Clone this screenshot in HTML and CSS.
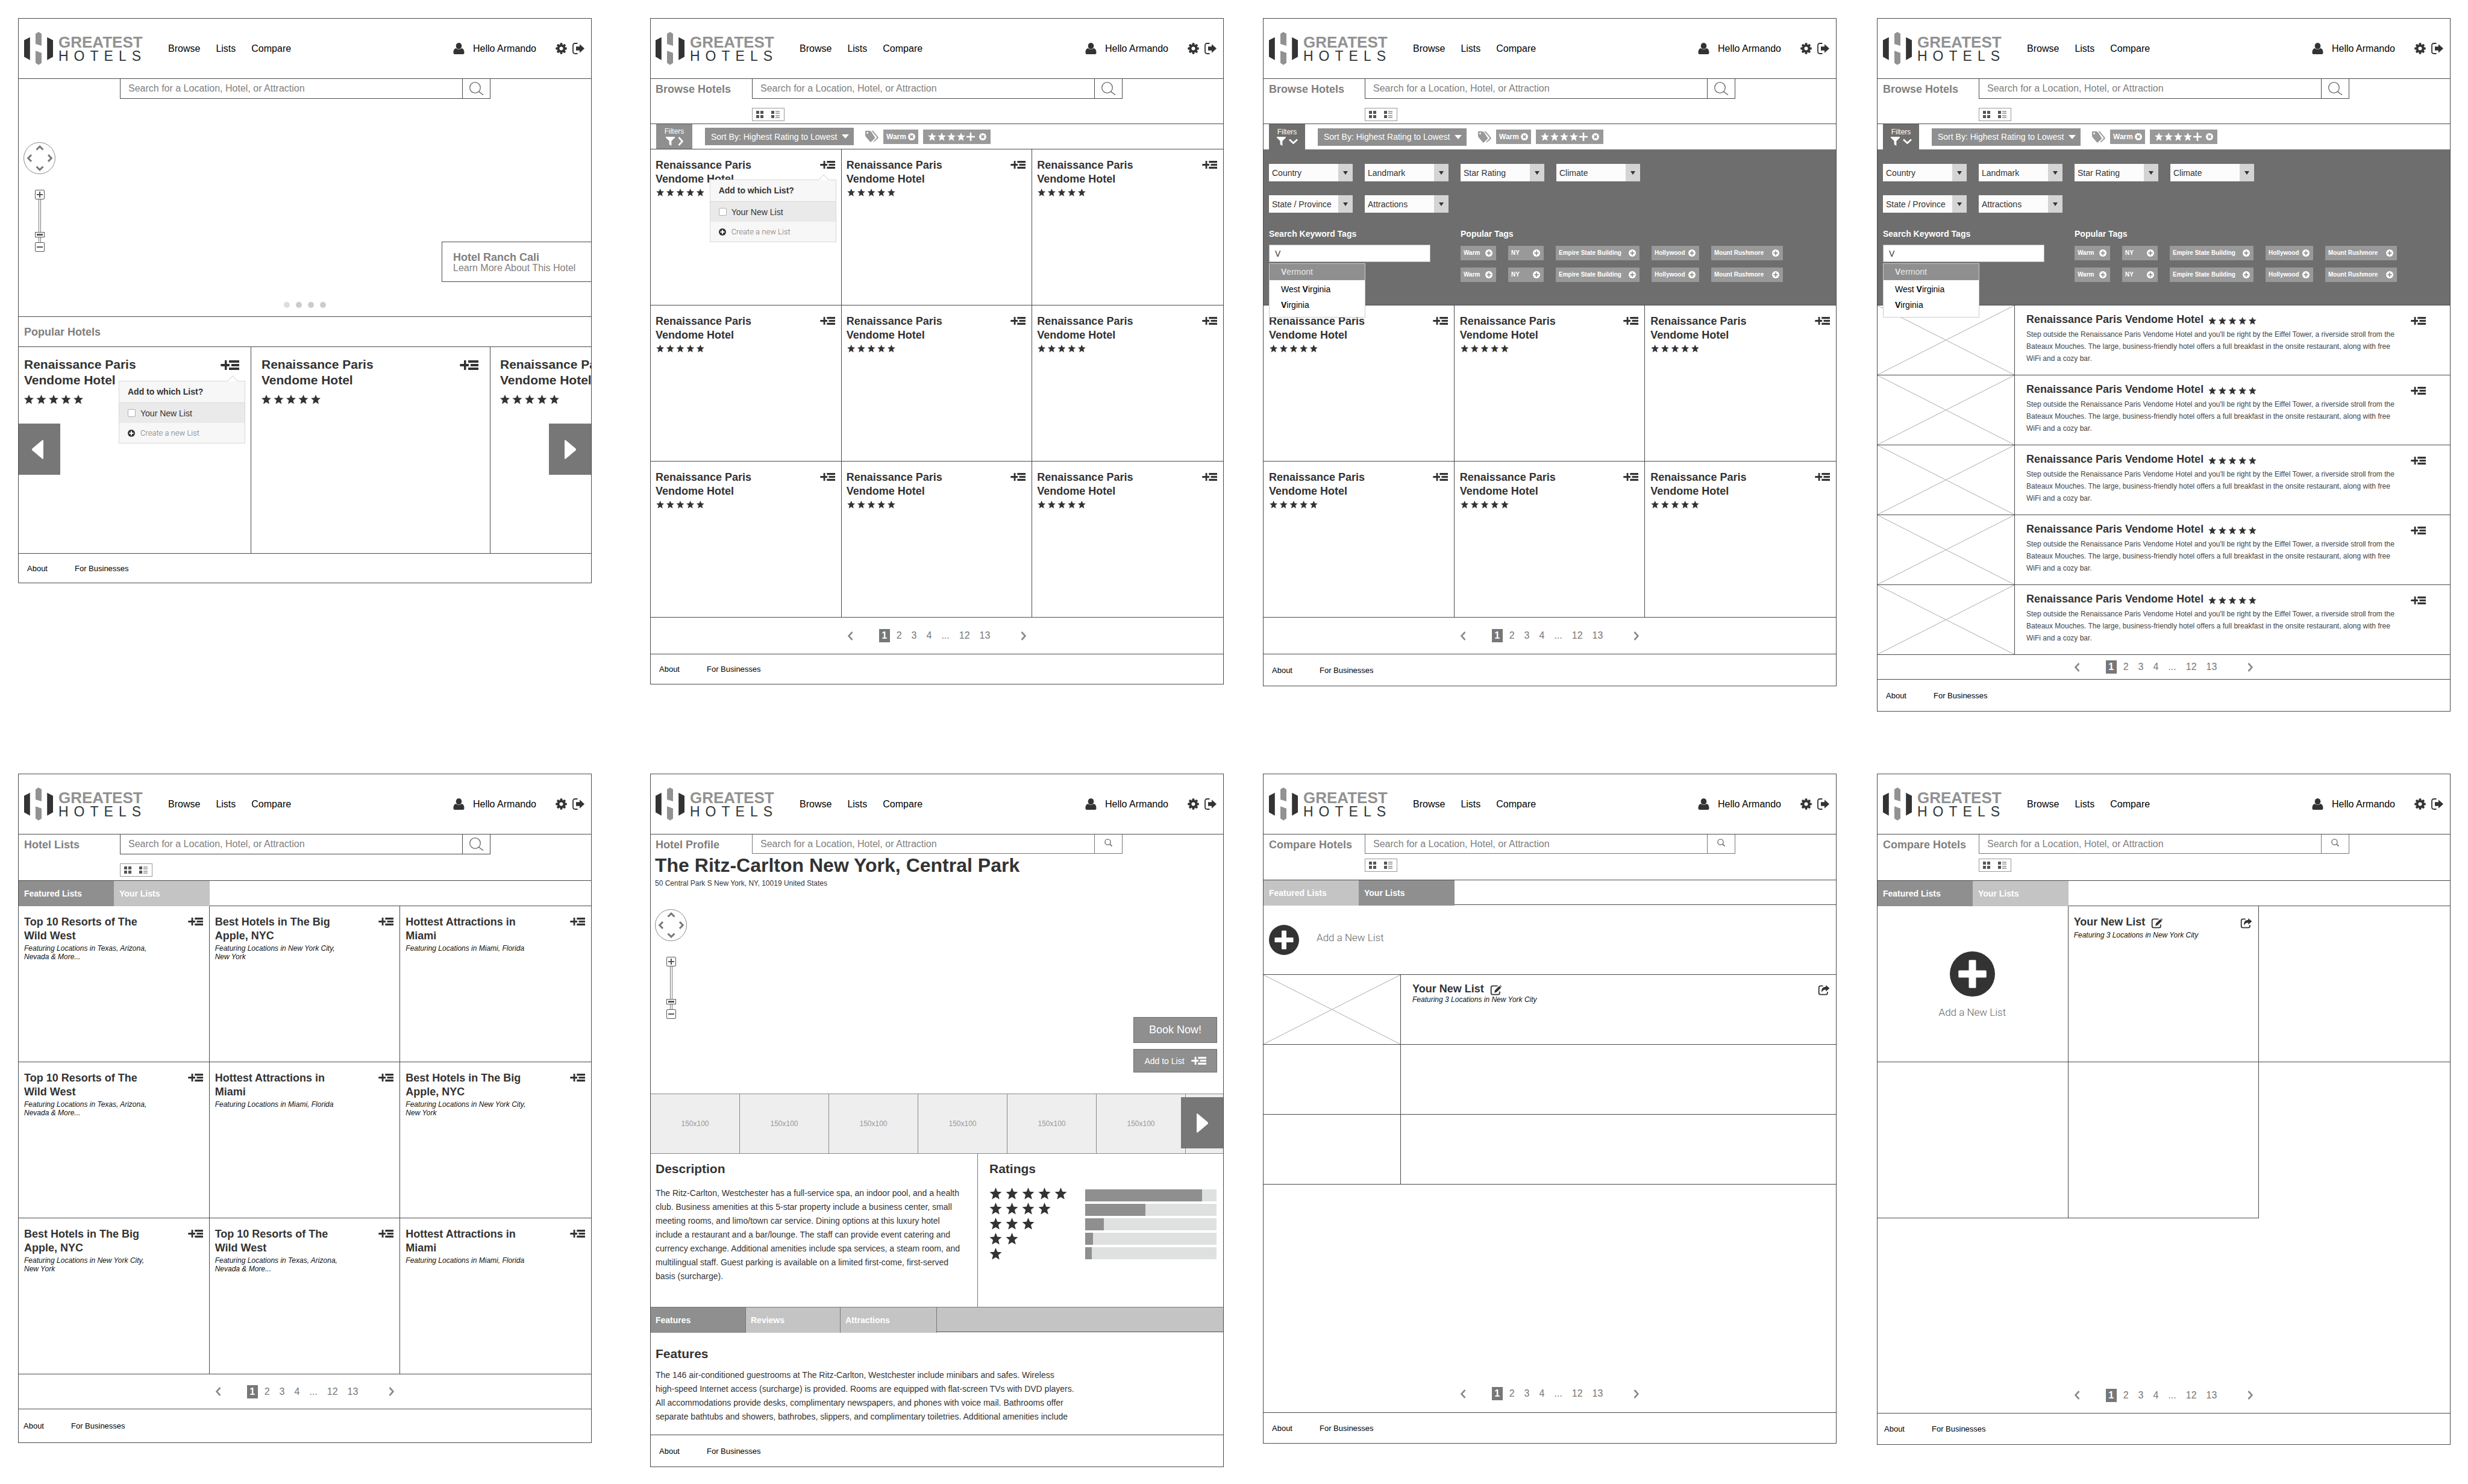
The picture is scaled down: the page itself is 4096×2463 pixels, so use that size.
FILE: index.html
```html
<!DOCTYPE html>
<html lang="en">
<head>
<meta charset="utf-8">
<title>Greatest Hotels – Wireframes</title>
<link rel="stylesheet" href="styles.css">
</head>
<body>
<svg class="defs" aria-hidden="true">
  <symbol id="logo" viewBox="0 0 48 55"><path fill="#333" d="M0 13.7 9.8 8.7v38L0 41.3zM48 13.7 38.2 8.7v38L48 41.3z"/><path fill="#929292" d="M19 3 24 0l5 3v20l-10-3zM19 31.3l10 3.5v16.7L24 54.7l-5-3.2z"/></symbol>
  <symbol id="user" viewBox="0 0 18 19"><ellipse cx="9" cy="5.2" rx="4.8" ry="5.2"/><path d="M0 16.5c0-4 1-6.500 4.400-7.500 2.600 2.500 6.600 2.500 9.200 0C17 10 18 12.500 18 16.500Q18 19 15.500 19h-13Q0 19 0 16.500z"/></symbol>
  <symbol id="gear" viewBox="0 0 20 20"><circle cx="10" cy="10" r="7.200"/><g id="teeth"><rect x="8" y="0.300" width="4" height="19.400" rx="1"/><rect x="0.300" y="8" width="19.400" height="4" rx="1"/></g><g transform="rotate(45 10 10)"><rect x="8" y="0.300" width="4" height="19.400" rx="1"/><rect x="0.300" y="8" width="19.400" height="4" rx="1"/></g><circle cx="10" cy="10" r="3.200" fill="#fff"/></symbol>
  <symbol id="exit" viewBox="0 0 20 19"><path d="M8.500 1H4.500Q1 1 1 4.500v10Q1 18 4.500 18h4" fill="none" stroke="currentColor" stroke-width="1.800"/><path d="M6 6.200h6V2.200l8 7.300-8 7.300v-4H6z"/></symbol>
  <symbol id="lens" viewBox="0 0 24 22"><ellipse cx="9.500" cy="9.500" rx="8.800" ry="8.800" fill="none" stroke="currentColor" stroke-width="1.300"/><path d="M15.500 16l7.500 5.500" fill="none" stroke="currentColor" stroke-width="1.500"/></symbol>
  <symbol id="lens-s" viewBox="0 0 13 13"><circle cx="5.500" cy="5.500" r="4.600" fill="none" stroke="currentColor" stroke-width="1.300"/><path d="M9 9l3.500 3.500" fill="none" stroke="currentColor" stroke-width="1.600"/></symbol>
  <symbol id="add" viewBox="0 0 31 16"><path d="M0 8q0-2 1.500-2H7V0h3.500v6H15v4h-4.500v6H7v-6H1.500Q0 10 0 8zM14 0h17v4H14zM18 6h13v4H18zM14 12h17v4H14z"/></symbol>
  <symbol id="star" viewBox="0 0 16 16"><path d="M8 0l2.200 5.300 5.800.4-4.500 3.800L13 15.600 8 12.600 3 15.600l1.500-6.100L0 5.700l5.800-.4z"/></symbol>
  <symbol id="stars" viewBox="0 0 98 16"><path id="st" d="M8 0l2.200 5.300 5.800.4-4.500 3.800L13 15.600 8 12.600 3 15.600l1.500-6.100L0 5.700l5.800-.4z"/><use href="#st" x="20.500"/><use href="#st" x="41"/><use href="#st" x="61.500"/><use href="#st" x="82"/></symbol>
  <symbol id="plus-c" viewBox="0 0 50 50"><circle cx="25" cy="25" r="25"/><path d="M21 10.500q0-1 1-1h6q1 0 1 1V21h10.500q1 0 1 1v6q0 1-1 1H29v10.500q0 1-1 1h-6q-1 0-1-1V29H10.500q-1 0-1-1v-6q0-1 1-1H21z" class="hole"/></symbol>
  <symbol id="x-c" viewBox="0 0 12 12"><circle cx="6" cy="6" r="6"/><path d="M3.700 3.700l4.600 4.600M8.300 3.700L3.700 8.300" class="hole-line"/></symbol>
  <symbol id="p-c" viewBox="0 0 12 12"><circle cx="6" cy="6" r="6"/><path d="M6 2.500v7M2.500 6h7" class="hole-line"/></symbol>
  <symbol id="plus" viewBox="0 0 14 14"><path d="M5.700 0h2.600v5.700H14v2.600H8.300V14H5.700V8.300H0V5.700h5.700z"/></symbol>
  <symbol id="tag" viewBox="0 0 22 19"><path fill-rule="evenodd" d="M0 1q0-1 1-1h6l3 1.500 6 9.500q.5 1-.3 1.700L9.500 18.500q-.8.500-1.500-.3L1 10Q0 9 0 7zM3.500 2a1.500 1.500 0 1 0 .1 0z"/><path d="M10.500 0H13l8.500 10.500q.6 1-.2 2l-6.500 6-1-1.200 5.200-5.300q.6-.8 0-1.700z"/></symbol>
  <symbol id="funnel" viewBox="0 0 16 16"><path d="M0 0h16v1.500L10 7.500V16l-4-2.500v-6L0 1.500z"/></symbol>
  <symbol id="chev-r" viewBox="0 0 9 15"><path d="M1.500 1l6 6.500-6 6.500" fill="none" stroke="currentColor" stroke-width="2.600"/></symbol>
  <symbol id="chev-l" viewBox="0 0 9 15"><path d="M7.500 1l-6 6.500 6 6.500" fill="none" stroke="currentColor" stroke-width="2.600"/></symbol>
  <symbol id="chev-d" viewBox="0 0 15 9"><path d="M1 1.500l6.500 6 6.500-6" fill="none" stroke="currentColor" stroke-width="2.800"/></symbol>
  <symbol id="pan" viewBox="0 0 14 9"><path d="M1.500 7.500L7 2.200l5.500 5.300" fill="none" stroke="currentColor" stroke-width="3"/></symbol>
  <symbol id="tri-l" viewBox="0 0 19 32"><path d="M17.500.300Q19 0 19 1.500v29q0 1.500-1.500 1.200L.5 17.500q-1-1.500 0-3z"/></symbol>
  <symbol id="tri-r" viewBox="0 0 19 32"><path d="M1.500.300Q0 0 0 1.500v29q0 1.500 1.500 1.200l17-14.200q1-1.500 0-3z"/></symbol>
  <symbol id="tiles" viewBox="0 0 12 12"><path d="M0 0h5v5H0zM7 0h5v5H7zM0 7h5v5H0zM7 7h5v5H7z"/></symbol>
  <symbol id="rows" viewBox="0 0 14 12"><path d="M0 0h5v5H0zM0 7h5v5H0z"/><path fill="#aaa" d="M7 0h7v2H7zM7 3h7v2H7zM7 7h7v2H7zM7 10h7v2H7z"/></symbol>
  <symbol id="edit" viewBox="0 0 20 18"><path d="M12.500 1.500H4Q1.200 1.500 1.200 4.300v9.400q0 2.800 2.800 2.800h9.500q2.800 0 2.800-2.800V11" fill="none" stroke="currentColor" stroke-width="1.900"/><path d="M7 13.500l.8-4.300L15.500 1.500l3.200 3L11 12.300zM16.300.8q.9-.9 1.900 0l1.200 1.200q.8.900 0 1.700z"/></symbol>
  <symbol id="share" viewBox="0 0 20 18"><path d="M8.500 1.500H4Q1.200 1.500 1.200 4.300v9.400q0 2.800 2.800 2.800h9.500q2.800 0 2.800-2.800V12" fill="none" stroke="currentColor" stroke-width="1.900"/><path d="M13.500 0L20 5.500 13.500 11V8Q8.500 7.500 6 13 4.500 3.500 13.500 3z"/></symbol>
</svg>

<main class="board">

<!-- Home -->
<section class="frame c1">
  <header class="top">
    <a class="logo" href="#"><svg><use href="#logo"/></svg><span class="word"><b>GREATEST</b><span>HOTELS</span></span></a>
    <nav><a href="#">Browse</a><a href="#">Lists</a><a href="#">Compare</a></nav>
    <a class="who" href="#"><svg><use href="#user"/></svg>Hello Armando</a>
    <button class="ic" aria-label="Settings"><svg><use href="#gear"/></svg></button><button class="ic" aria-label="Log out"><svg><use href="#exit"/></svg></button>
  </header>
  <div class="tools bare"><form class="search"><input type="text" aria-label="Search" placeholder="Search for a Location, Hotel, or Attraction"><button type="button" aria-label="Search"><svg><use href="#lens"/></svg></button></form></div>
  <div class="hero">
    <div class="map">
      <div class="pad"><button aria-label="Up"><svg><use href="#pan"/></svg></button><button aria-label="Left"><svg><use href="#pan"/></svg></button><button aria-label="Right"><svg><use href="#pan"/></svg></button><button aria-label="Down"><svg><use href="#pan"/></svg></button></div>
      <div class="zoom"><button class="in" aria-label="Zoom in"></button><input type="range" min="0" max="100" value="13" aria-label="Zoom"><button aria-label="Zoom out"></button></div>
    </div>
    <a class="callout" href="#"><b>Hotel Ranch Cali</b><span>Learn More About This Hotel</span></a>
    <div class="dots"><i></i><i></i><i></i><i></i></div>
  </div>
  <h2 class="bar">Popular Hotels</h2>
  <div class="carousel">
    <article class="card big"><div class="head"><h3>Renaissance Paris<br>Vendome Hotel</h3><button class="add" aria-label="Add to list"><svg><use href="#add"/></svg></button></div><svg class="stars"><use href="#stars"/></svg>
      <div class="pop"><h4>Add to which List?</h4><label><input type="checkbox">Your New List</label><button><svg><use href="#p-c"/></svg>Create a new List</button></div></article>
    <article class="card big"><div class="head"><h3>Renaissance Paris<br>Vendome Hotel</h3><button class="add" aria-label="Add to list"><svg><use href="#add"/></svg></button></div><svg class="stars"><use href="#stars"/></svg></article>
    <article class="card big"><div class="head"><h3>Renaissance Paris<br>Vendome Hotel</h3></div><svg class="stars"><use href="#stars"/></svg></article>
    <button class="arrow prev" aria-label="Previous"><svg><use href="#tri-l"/></svg></button>
    <button class="arrow next" aria-label="Next"><svg><use href="#tri-r"/></svg></button>
  </div>
  <footer><a href="#">About</a><a href="#">For Businesses</a></footer>
</section>

<!-- Browse, grid -->
<section class="frame c2">
  <header class="top">
    <a class="logo" href="#"><svg><use href="#logo"/></svg><span class="word"><b>GREATEST</b><span>HOTELS</span></span></a>
    <nav><a href="#">Browse</a><a href="#">Lists</a><a href="#">Compare</a></nav>
    <a class="who" href="#"><svg><use href="#user"/></svg>Hello Armando</a>
    <button class="ic" aria-label="Settings"><svg><use href="#gear"/></svg></button><button class="ic" aria-label="Log out"><svg><use href="#exit"/></svg></button>
  </header>
  <div class="tools"><h2>Browse Hotels</h2><form class="search"><input type="text" aria-label="Search" placeholder="Search for a Location, Hotel, or Attraction"><button type="button" aria-label="Search"><svg><use href="#lens"/></svg></button></form><div class="views"><button aria-label="Grid view"><svg><use href="#tiles"/></svg></button><button aria-label="List view"><svg><use href="#rows"/></svg></button></div></div>
  <div class="filters">
    <button class="ftoggle">Filters<span><svg class="f"><use href="#funnel"/></svg><svg class="r"><use href="#chev-r"/></svg></span></button>
    <label class="sort"><select aria-label="Sort by"><option>Sort By: Highest Rating to Lowest</option></select></label>
    <svg class="tagic"><use href="#tag"/></svg>
    <span class="chip">Warm<button aria-label="Remove Warm"><svg><use href="#x-c"/></svg></button></span>
    <span class="chip wide"><span class="four"><svg><use href="#star"/></svg><svg><use href="#star"/></svg><svg><use href="#star"/></svg><svg><use href="#star"/></svg><svg><use href="#plus"/></svg></span><button aria-label="Remove rating"><svg><use href="#x-c"/></svg></button></span>
  </div>
  <div class="grid">
    <article class="card"><div class="head"><h3>Renaissance Paris<br>Vendome Hotel</h3><button class="add" aria-label="Add to list"><svg><use href="#add"/></svg></button></div><svg class="stars"><use href="#stars"/></svg>
      <div class="pop"><h4>Add to which List?</h4><label><input type="checkbox">Your New List</label><button><svg><use href="#p-c"/></svg>Create a new List</button></div></article>
    <article class="card"><div class="head"><h3>Renaissance Paris<br>Vendome Hotel</h3><button class="add" aria-label="Add to list"><svg><use href="#add"/></svg></button></div><svg class="stars"><use href="#stars"/></svg></article>
    <article class="card"><div class="head"><h3>Renaissance Paris<br>Vendome Hotel</h3><button class="add" aria-label="Add to list"><svg><use href="#add"/></svg></button></div><svg class="stars"><use href="#stars"/></svg></article>
    <article class="card"><div class="head"><h3>Renaissance Paris<br>Vendome Hotel</h3><button class="add" aria-label="Add to list"><svg><use href="#add"/></svg></button></div><svg class="stars"><use href="#stars"/></svg></article>
    <article class="card"><div class="head"><h3>Renaissance Paris<br>Vendome Hotel</h3><button class="add" aria-label="Add to list"><svg><use href="#add"/></svg></button></div><svg class="stars"><use href="#stars"/></svg></article>
    <article class="card"><div class="head"><h3>Renaissance Paris<br>Vendome Hotel</h3><button class="add" aria-label="Add to list"><svg><use href="#add"/></svg></button></div><svg class="stars"><use href="#stars"/></svg></article>
    <article class="card"><div class="head"><h3>Renaissance Paris<br>Vendome Hotel</h3><button class="add" aria-label="Add to list"><svg><use href="#add"/></svg></button></div><svg class="stars"><use href="#stars"/></svg></article>
    <article class="card"><div class="head"><h3>Renaissance Paris<br>Vendome Hotel</h3><button class="add" aria-label="Add to list"><svg><use href="#add"/></svg></button></div><svg class="stars"><use href="#stars"/></svg></article>
    <article class="card"><div class="head"><h3>Renaissance Paris<br>Vendome Hotel</h3><button class="add" aria-label="Add to list"><svg><use href="#add"/></svg></button></div><svg class="stars"><use href="#stars"/></svg></article>
  </div>
  <nav class="pages"><a href="#" aria-label="Previous"><svg><use href="#chev-l"/></svg></a><ol><li><a class="on" href="#">1</a></li><li><a href="#">2</a></li><li><a href="#">3</a></li><li><a href="#">4</a></li><li>...</li><li><a href="#">12</a></li><li><a href="#">13</a></li></ol><a href="#" aria-label="Next"><svg><use href="#chev-r"/></svg></a></nav>
  <footer><a href="#">About</a><a href="#">For Businesses</a></footer>
</section>

<!-- Browse, grid with filters open -->
<section class="frame c3">
  <header class="top">
    <a class="logo" href="#"><svg><use href="#logo"/></svg><span class="word"><b>GREATEST</b><span>HOTELS</span></span></a>
    <nav><a href="#">Browse</a><a href="#">Lists</a><a href="#">Compare</a></nav>
    <a class="who" href="#"><svg><use href="#user"/></svg>Hello Armando</a>
    <button class="ic" aria-label="Settings"><svg><use href="#gear"/></svg></button><button class="ic" aria-label="Log out"><svg><use href="#exit"/></svg></button>
  </header>
  <div class="tools"><h2>Browse Hotels</h2><form class="search"><input type="text" aria-label="Search" placeholder="Search for a Location, Hotel, or Attraction"><button type="button" aria-label="Search"><svg><use href="#lens"/></svg></button></form><div class="views"><button aria-label="Grid view"><svg><use href="#tiles"/></svg></button><button aria-label="List view"><svg><use href="#rows"/></svg></button></div></div>
  <div class="filters open">
    <button class="ftoggle">Filters<span><svg class="f"><use href="#funnel"/></svg><svg class="d"><use href="#chev-d"/></svg></span></button>
    <label class="sort"><select aria-label="Sort by"><option>Sort By: Highest Rating to Lowest</option></select></label>
    <svg class="tagic"><use href="#tag"/></svg>
    <span class="chip">Warm<button aria-label="Remove Warm"><svg><use href="#x-c"/></svg></button></span>
    <span class="chip wide"><span class="four"><svg><use href="#star"/></svg><svg><use href="#star"/></svg><svg><use href="#star"/></svg><svg><use href="#star"/></svg><svg><use href="#plus"/></svg></span><button aria-label="Remove rating"><svg><use href="#x-c"/></svg></button></span>
  </div>
  <div class="panel">
    <div class="selects"><label><select aria-label="Country"><option>Country</option></select></label><label><select aria-label="Landmark"><option>Landmark</option></select></label><label><select aria-label="Star Rating"><option>Star Rating</option></select></label><label><select aria-label="Climate"><option>Climate</option></select></label><label><select aria-label="State / Province"><option>State / Province</option></select></label><label><select aria-label="Attractions"><option>Attractions</option></select></label></div>
    <div class="tagrow">
      <div class="kw"><label for="kw3">Search Keyword Tags</label><input id="kw3" type="text" value="V"><ul class="sugg"><li class="on"><b>V</b>ermont</li><li>West <b>V</b>irginia</li><li><b>V</b>irginia</li></ul></div>
      <div class="ptags"><h4>Popular Tags</h4><div class="tags"><button>Warm<svg><use href="#p-c"/></svg></button><button>NY<svg><use href="#p-c"/></svg></button><button>Empire State Building<svg><use href="#p-c"/></svg></button><button>Hollywood<svg><use href="#p-c"/></svg></button><button>Mount Rushmore<svg><use href="#p-c"/></svg></button><button>Warm<svg><use href="#p-c"/></svg></button><button>NY<svg><use href="#p-c"/></svg></button><button>Empire State Building<svg><use href="#p-c"/></svg></button><button>Hollywood<svg><use href="#p-c"/></svg></button><button>Mount Rushmore<svg><use href="#p-c"/></svg></button></div></div>
    </div>
  </div>
  <div class="grid">
    <article class="card"><div class="head"><h3>Renaissance Paris<br>Vendome Hotel</h3><button class="add" aria-label="Add to list"><svg><use href="#add"/></svg></button></div><svg class="stars"><use href="#stars"/></svg></article>
    <article class="card"><div class="head"><h3>Renaissance Paris<br>Vendome Hotel</h3><button class="add" aria-label="Add to list"><svg><use href="#add"/></svg></button></div><svg class="stars"><use href="#stars"/></svg></article>
    <article class="card"><div class="head"><h3>Renaissance Paris<br>Vendome Hotel</h3><button class="add" aria-label="Add to list"><svg><use href="#add"/></svg></button></div><svg class="stars"><use href="#stars"/></svg></article>
    <article class="card"><div class="head"><h3>Renaissance Paris<br>Vendome Hotel</h3><button class="add" aria-label="Add to list"><svg><use href="#add"/></svg></button></div><svg class="stars"><use href="#stars"/></svg></article>
    <article class="card"><div class="head"><h3>Renaissance Paris<br>Vendome Hotel</h3><button class="add" aria-label="Add to list"><svg><use href="#add"/></svg></button></div><svg class="stars"><use href="#stars"/></svg></article>
    <article class="card"><div class="head"><h3>Renaissance Paris<br>Vendome Hotel</h3><button class="add" aria-label="Add to list"><svg><use href="#add"/></svg></button></div><svg class="stars"><use href="#stars"/></svg></article>
  </div>
  <nav class="pages"><a href="#" aria-label="Previous"><svg><use href="#chev-l"/></svg></a><ol><li><a class="on" href="#">1</a></li><li><a href="#">2</a></li><li><a href="#">3</a></li><li><a href="#">4</a></li><li>...</li><li><a href="#">12</a></li><li><a href="#">13</a></li></ol><a href="#" aria-label="Next"><svg><use href="#chev-r"/></svg></a></nav>
  <footer><a href="#">About</a><a href="#">For Businesses</a></footer>
</section>

<!-- Browse, list with filters open -->
<section class="frame c4">
  <header class="top">
    <a class="logo" href="#"><svg><use href="#logo"/></svg><span class="word"><b>GREATEST</b><span>HOTELS</span></span></a>
    <nav><a href="#">Browse</a><a href="#">Lists</a><a href="#">Compare</a></nav>
    <a class="who" href="#"><svg><use href="#user"/></svg>Hello Armando</a>
    <button class="ic" aria-label="Settings"><svg><use href="#gear"/></svg></button><button class="ic" aria-label="Log out"><svg><use href="#exit"/></svg></button>
  </header>
  <div class="tools"><h2>Browse Hotels</h2><form class="search"><input type="text" aria-label="Search" placeholder="Search for a Location, Hotel, or Attraction"><button type="button" aria-label="Search"><svg><use href="#lens"/></svg></button></form><div class="views"><button aria-label="Grid view"><svg><use href="#tiles"/></svg></button><button aria-label="List view"><svg><use href="#rows"/></svg></button></div></div>
  <div class="filters open">
    <button class="ftoggle">Filters<span><svg class="f"><use href="#funnel"/></svg><svg class="d"><use href="#chev-d"/></svg></span></button>
    <label class="sort"><select aria-label="Sort by"><option>Sort By: Highest Rating to Lowest</option></select></label>
    <svg class="tagic"><use href="#tag"/></svg>
    <span class="chip">Warm<button aria-label="Remove Warm"><svg><use href="#x-c"/></svg></button></span>
    <span class="chip wide"><span class="four"><svg><use href="#star"/></svg><svg><use href="#star"/></svg><svg><use href="#star"/></svg><svg><use href="#star"/></svg><svg><use href="#plus"/></svg></span><button aria-label="Remove rating"><svg><use href="#x-c"/></svg></button></span>
  </div>
  <div class="panel">
    <div class="selects"><label><select aria-label="Country"><option>Country</option></select></label><label><select aria-label="Landmark"><option>Landmark</option></select></label><label><select aria-label="Star Rating"><option>Star Rating</option></select></label><label><select aria-label="Climate"><option>Climate</option></select></label><label><select aria-label="State / Province"><option>State / Province</option></select></label><label><select aria-label="Attractions"><option>Attractions</option></select></label></div>
    <div class="tagrow">
      <div class="kw"><label for="kw4">Search Keyword Tags</label><input id="kw4" type="text" value="V"><ul class="sugg"><li class="on"><b>V</b>ermont</li><li>West <b>V</b>irginia</li><li><b>V</b>irginia</li></ul></div>
      <div class="ptags"><h4>Popular Tags</h4><div class="tags"><button>Warm<svg><use href="#p-c"/></svg></button><button>NY<svg><use href="#p-c"/></svg></button><button>Empire State Building<svg><use href="#p-c"/></svg></button><button>Hollywood<svg><use href="#p-c"/></svg></button><button>Mount Rushmore<svg><use href="#p-c"/></svg></button><button>Warm<svg><use href="#p-c"/></svg></button><button>NY<svg><use href="#p-c"/></svg></button><button>Empire State Building<svg><use href="#p-c"/></svg></button><button>Hollywood<svg><use href="#p-c"/></svg></button><button>Mount Rushmore<svg><use href="#p-c"/></svg></button></div></div>
    </div>
  </div>
  <div class="rows">
    <article class="row"><svg class="ph" viewBox="0 0 100 100" preserveAspectRatio="none"><path d="M0 0l100 100M100 0L0 100"/></svg><div class="info"><div class="line"><h3>Renaissance Paris Vendome Hotel</h3><svg class="stars"><use href="#stars"/></svg><button class="add" aria-label="Add to list"><svg><use href="#add"/></svg></button></div><p>Step outside the Renaissance Paris Vendome Hotel and you'll be right by the Eiffel Tower, a riverside stroll from the<br>Bateaux Mouches. The large, business-friendly hotel offers a full breakfast in the onsite restaurant, along with free<br>WiFi and a cozy bar.</p></div></article>
    <article class="row"><svg class="ph" viewBox="0 0 100 100" preserveAspectRatio="none"><path d="M0 0l100 100M100 0L0 100"/></svg><div class="info"><div class="line"><h3>Renaissance Paris Vendome Hotel</h3><svg class="stars"><use href="#stars"/></svg><button class="add" aria-label="Add to list"><svg><use href="#add"/></svg></button></div><p>Step outside the Renaissance Paris Vendome Hotel and you'll be right by the Eiffel Tower, a riverside stroll from the<br>Bateaux Mouches. The large, business-friendly hotel offers a full breakfast in the onsite restaurant, along with free<br>WiFi and a cozy bar.</p></div></article>
    <article class="row"><svg class="ph" viewBox="0 0 100 100" preserveAspectRatio="none"><path d="M0 0l100 100M100 0L0 100"/></svg><div class="info"><div class="line"><h3>Renaissance Paris Vendome Hotel</h3><svg class="stars"><use href="#stars"/></svg><button class="add" aria-label="Add to list"><svg><use href="#add"/></svg></button></div><p>Step outside the Renaissance Paris Vendome Hotel and you'll be right by the Eiffel Tower, a riverside stroll from the<br>Bateaux Mouches. The large, business-friendly hotel offers a full breakfast in the onsite restaurant, along with free<br>WiFi and a cozy bar.</p></div></article>
    <article class="row"><svg class="ph" viewBox="0 0 100 100" preserveAspectRatio="none"><path d="M0 0l100 100M100 0L0 100"/></svg><div class="info"><div class="line"><h3>Renaissance Paris Vendome Hotel</h3><svg class="stars"><use href="#stars"/></svg><button class="add" aria-label="Add to list"><svg><use href="#add"/></svg></button></div><p>Step outside the Renaissance Paris Vendome Hotel and you'll be right by the Eiffel Tower, a riverside stroll from the<br>Bateaux Mouches. The large, business-friendly hotel offers a full breakfast in the onsite restaurant, along with free<br>WiFi and a cozy bar.</p></div></article>
    <article class="row"><svg class="ph" viewBox="0 0 100 100" preserveAspectRatio="none"><path d="M0 0l100 100M100 0L0 100"/></svg><div class="info"><div class="line"><h3>Renaissance Paris Vendome Hotel</h3><svg class="stars"><use href="#stars"/></svg><button class="add" aria-label="Add to list"><svg><use href="#add"/></svg></button></div><p>Step outside the Renaissance Paris Vendome Hotel and you'll be right by the Eiffel Tower, a riverside stroll from the<br>Bateaux Mouches. The large, business-friendly hotel offers a full breakfast in the onsite restaurant, along with free<br>WiFi and a cozy bar.</p></div></article>
  </div>
  <nav class="pages"><a href="#" aria-label="Previous"><svg><use href="#chev-l"/></svg></a><ol><li><a class="on" href="#">1</a></li><li><a href="#">2</a></li><li><a href="#">3</a></li><li><a href="#">4</a></li><li>...</li><li><a href="#">12</a></li><li><a href="#">13</a></li></ol><a href="#" aria-label="Next"><svg><use href="#chev-r"/></svg></a></nav>
  <footer><a href="#">About</a><a href="#">For Businesses</a></footer>
</section>

<!-- Hotel lists -->
<section class="frame c5">
  <header class="top">
    <a class="logo" href="#"><svg><use href="#logo"/></svg><span class="word"><b>GREATEST</b><span>HOTELS</span></span></a>
    <nav><a href="#">Browse</a><a href="#">Lists</a><a href="#">Compare</a></nav>
    <a class="who" href="#"><svg><use href="#user"/></svg>Hello Armando</a>
    <button class="ic" aria-label="Settings"><svg><use href="#gear"/></svg></button><button class="ic" aria-label="Log out"><svg><use href="#exit"/></svg></button>
  </header>
  <div class="tools"><h2>Hotel Lists</h2><form class="search"><input type="text" aria-label="Search" placeholder="Search for a Location, Hotel, or Attraction"><button type="button" aria-label="Search"><svg><use href="#lens"/></svg></button></form><div class="views"><button aria-label="Grid view"><svg><use href="#tiles"/></svg></button><button aria-label="List view"><svg><use href="#rows"/></svg></button></div></div>
  <nav class="tabs"><a class="on" href="#">Featured Lists</a><a href="#">Your Lists</a></nav>
  <div class="grid">
    <article class="card"><div class="head"><h3>Top 10 Resorts of The<br>Wild West</h3><button class="add" aria-label="Add to list"><svg><use href="#add"/></svg></button></div><p class="sub">Featuring Locations in Texas, Arizona,<br>Nevada &amp; More...</p></article>
    <article class="card"><div class="head"><h3>Best Hotels in The Big<br>Apple, NYC</h3><button class="add" aria-label="Add to list"><svg><use href="#add"/></svg></button></div><p class="sub">Featuring Locations in New York City,<br>New York</p></article>
    <article class="card"><div class="head"><h3>Hottest Attractions in<br>Miami</h3><button class="add" aria-label="Add to list"><svg><use href="#add"/></svg></button></div><p class="sub">Featuring Locations in Miami, Florida</p></article>
    <article class="card"><div class="head"><h3>Top 10 Resorts of The<br>Wild West</h3><button class="add" aria-label="Add to list"><svg><use href="#add"/></svg></button></div><p class="sub">Featuring Locations in Texas, Arizona,<br>Nevada &amp; More...</p></article>
    <article class="card"><div class="head"><h3>Hottest Attractions in<br>Miami</h3><button class="add" aria-label="Add to list"><svg><use href="#add"/></svg></button></div><p class="sub">Featuring Locations in Miami, Florida</p></article>
    <article class="card"><div class="head"><h3>Best Hotels in The Big<br>Apple, NYC</h3><button class="add" aria-label="Add to list"><svg><use href="#add"/></svg></button></div><p class="sub">Featuring Locations in New York City,<br>New York</p></article>
    <article class="card"><div class="head"><h3>Best Hotels in The Big<br>Apple, NYC</h3><button class="add" aria-label="Add to list"><svg><use href="#add"/></svg></button></div><p class="sub">Featuring Locations in New York City,<br>New York</p></article>
    <article class="card"><div class="head"><h3>Top 10 Resorts of The<br>Wild West</h3><button class="add" aria-label="Add to list"><svg><use href="#add"/></svg></button></div><p class="sub">Featuring Locations in Texas, Arizona,<br>Nevada &amp; More...</p></article>
    <article class="card"><div class="head"><h3>Hottest Attractions in<br>Miami</h3><button class="add" aria-label="Add to list"><svg><use href="#add"/></svg></button></div><p class="sub">Featuring Locations in Miami, Florida</p></article>
  </div>
  <nav class="pages"><a href="#" aria-label="Previous"><svg><use href="#chev-l"/></svg></a><ol><li><a class="on" href="#">1</a></li><li><a href="#">2</a></li><li><a href="#">3</a></li><li><a href="#">4</a></li><li>...</li><li><a href="#">12</a></li><li><a href="#">13</a></li></ol><a href="#" aria-label="Next"><svg><use href="#chev-r"/></svg></a></nav>
  <footer><a href="#">About</a><a href="#">For Businesses</a></footer>
</section>

<!-- Hotel profile -->
<section class="frame c6">
  <header class="top">
    <a class="logo" href="#"><svg><use href="#logo"/></svg><span class="word"><b>GREATEST</b><span>HOTELS</span></span></a>
    <nav><a href="#">Browse</a><a href="#">Lists</a><a href="#">Compare</a></nav>
    <a class="who" href="#"><svg><use href="#user"/></svg>Hello Armando</a>
    <button class="ic" aria-label="Settings"><svg><use href="#gear"/></svg></button><button class="ic" aria-label="Log out"><svg><use href="#exit"/></svg></button>
  </header>
  <div class="tools bare small"><h2>Hotel Profile</h2><form class="search"><input type="text" aria-label="Search" placeholder="Search for a Location, Hotel, or Attraction"><button type="button" aria-label="Search"><svg><use href="#lens-s"/></svg></button></form></div>
  <div class="name"><h1>The Ritz-Carlton New York, Central Park</h1><p>50 Central Park S New York, NY, 10019 United States</p></div>
  <div class="hero photo">
    <div class="map">
      <div class="pad"><button aria-label="Up"><svg><use href="#pan"/></svg></button><button aria-label="Left"><svg><use href="#pan"/></svg></button><button aria-label="Right"><svg><use href="#pan"/></svg></button><button aria-label="Down"><svg><use href="#pan"/></svg></button></div>
      <div class="zoom"><button class="in" aria-label="Zoom in"></button><input type="range" min="0" max="100" value="13" aria-label="Zoom"><button aria-label="Zoom out"></button></div>
    </div>
    <div class="book"><button class="now">Book Now!</button><button class="tolist">Add to List<svg><use href="#add"/></svg></button></div>
  </div>
  <div class="thumbs"><span>150x100</span><span>150x100</span><span>150x100</span><span>150x100</span><span>150x100</span><span>150x100</span><span></span><button class="arrow next" aria-label="Next"><svg><use href="#tri-r"/></svg></button></div>
  <div class="detail">
    <div class="desc"><h2>Description</h2><p>The Ritz-Carlton, Westchester has a full-service spa, an indoor pool, and a health<br>club. Business amenities at this 5-star property include a business center, small<br>meeting rooms, and limo/town car service. Dining options at this luxury hotel<br>include a restaurant and a bar/lounge. The staff can provide event catering and<br>currency exchange. Additional amenities include spa services, a steam room, and<br>multilingual staff. Guest parking is available on a limited first-come, first-served<br>basis (surcharge).</p></div>
    <div class="ratings"><h2>Ratings</h2><div class="chart">
      <div class="scale"><span><svg><use href="#star"/></svg><svg><use href="#star"/></svg><svg><use href="#star"/></svg><svg><use href="#star"/></svg><svg><use href="#star"/></svg></span><span><svg><use href="#star"/></svg><svg><use href="#star"/></svg><svg><use href="#star"/></svg><svg><use href="#star"/></svg></span><span><svg><use href="#star"/></svg><svg><use href="#star"/></svg><svg><use href="#star"/></svg></span><span><svg><use href="#star"/></svg><svg><use href="#star"/></svg></span><span><svg><use href="#star"/></svg></span></div>
      <div class="bars"><div><i style="width:89%"></i></div><div><i style="width:46%"></i></div><div><i style="width:14%"></i></div><div><i style="width:6%"></i></div><div><i style="width:5%"></i></div></div>
    </div></div>
  </div>
  <nav class="tabs lined"><a class="on" href="#">Features</a><a href="#">Reviews</a><a href="#">Attractions</a></nav>
  <div class="feat"><h2>Features</h2><p>The 146 air-conditioned guestrooms at The Ritz-Carlton, Westchester include minibars and safes. Wireless<br>high-speed Internet access (surcharge) is provided. Rooms are equipped with flat-screen TVs with DVD players.<br>All accommodations provide desks, complimentary newspapers, and phones with voice mail. Bathrooms offer<br>separate bathtubs and showers, bathrobes, slippers, and complimentary toiletries. Additional amenities include</p></div>
  <footer><a href="#">About</a><a href="#">For Businesses</a></footer>
</section>

<!-- Compare, list -->
<section class="frame c7">
  <header class="top">
    <a class="logo" href="#"><svg><use href="#logo"/></svg><span class="word"><b>GREATEST</b><span>HOTELS</span></span></a>
    <nav><a href="#">Browse</a><a href="#">Lists</a><a href="#">Compare</a></nav>
    <a class="who" href="#"><svg><use href="#user"/></svg>Hello Armando</a>
    <button class="ic" aria-label="Settings"><svg><use href="#gear"/></svg></button><button class="ic" aria-label="Log out"><svg><use href="#exit"/></svg></button>
  </header>
  <div class="tools small"><h2>Compare Hotels</h2><form class="search"><input type="text" aria-label="Search" placeholder="Search for a Location, Hotel, or Attraction"><button type="button" aria-label="Search"><svg><use href="#lens-s"/></svg></button></form><div class="views"><button aria-label="Grid view"><svg><use href="#tiles"/></svg></button><button aria-label="List view"><svg><use href="#rows"/></svg></button></div></div>
  <nav class="tabs"><a href="#">Featured Lists</a><a class="on" href="#">Your Lists</a></nav>
  <div class="results">
    <button class="newrow"><svg><use href="#plus-c"/></svg><span>Add a New List</span></button>
    <article class="row"><svg class="ph" viewBox="0 0 100 100" preserveAspectRatio="none"><path d="M0 0l100 100M100 0L0 100"/></svg><div class="info"><div class="line"><h3>Your New List</h3><button class="edit" aria-label="Edit"><svg><use href="#edit"/></svg></button><button class="share" aria-label="Share"><svg><use href="#share"/></svg></button></div><p class="sub">Featuring 3 Locations in New York City</p></div></article>
    <div class="row"><span class="ph"></span></div>
    <div class="row"><span class="ph"></span></div>
  </div>
  <nav class="pages"><a href="#" aria-label="Previous"><svg><use href="#chev-l"/></svg></a><ol><li><a class="on" href="#">1</a></li><li><a href="#">2</a></li><li><a href="#">3</a></li><li><a href="#">4</a></li><li>...</li><li><a href="#">12</a></li><li><a href="#">13</a></li></ol><a href="#" aria-label="Next"><svg><use href="#chev-r"/></svg></a></nav>
  <footer><a href="#">About</a><a href="#">For Businesses</a></footer>
</section>

<!-- Compare, grid -->
<section class="frame c8">
  <header class="top">
    <a class="logo" href="#"><svg><use href="#logo"/></svg><span class="word"><b>GREATEST</b><span>HOTELS</span></span></a>
    <nav><a href="#">Browse</a><a href="#">Lists</a><a href="#">Compare</a></nav>
    <a class="who" href="#"><svg><use href="#user"/></svg>Hello Armando</a>
    <button class="ic" aria-label="Settings"><svg><use href="#gear"/></svg></button><button class="ic" aria-label="Log out"><svg><use href="#exit"/></svg></button>
  </header>
  <div class="tools small"><h2>Compare Hotels</h2><form class="search"><input type="text" aria-label="Search" placeholder="Search for a Location, Hotel, or Attraction"><button type="button" aria-label="Search"><svg><use href="#lens-s"/></svg></button></form><div class="views"><button aria-label="Grid view"><svg><use href="#tiles"/></svg></button><button aria-label="List view"><svg><use href="#rows"/></svg></button></div></div>
  <nav class="tabs"><a class="on" href="#">Featured Lists</a><a href="#">Your Lists</a></nav>
  <div class="results"><div class="grid">
    <div class="card new"><button><svg><use href="#plus-c"/></svg>Add a New List</button></div>
    <article class="card"><div class="line"><h3>Your New List</h3><button class="edit" aria-label="Edit"><svg><use href="#edit"/></svg></button><button class="share" aria-label="Share"><svg><use href="#share"/></svg></button></div><p class="sub">Featuring 3 Locations in New York City</p></article>
    <div class="card"></div><div class="card"></div><div class="card"></div>
  </div></div>
  <nav class="pages"><a href="#" aria-label="Previous"><svg><use href="#chev-l"/></svg></a><ol><li><a class="on" href="#">1</a></li><li><a href="#">2</a></li><li><a href="#">3</a></li><li><a href="#">4</a></li><li>...</li><li><a href="#">12</a></li><li><a href="#">13</a></li></ol><a href="#" aria-label="Next"><svg><use href="#chev-r"/></svg></a></nav>
  <footer><a href="#">About</a><a href="#">For Businesses</a></footer>
</section>

</main>
</body>
</html>
```
FILE: styles.css
```css
:root {
  --line: #4a4a4a;
  --ink: #333;
  --soft: #808080;
  --mid: #8f8f8f;
  --pale: #c4c4c4;
  --inset: 9px;
}
* { box-sizing: border-box; }
body, h1, h2, h3, h4, p, ol, ul { margin: 0; padding: 0; }
body {
  background: #fff;
  color: var(--ink);
  font-family: "Liberation Sans", Arial, sans-serif;
  font-size: 14px;
}
a { color: inherit; text-decoration: none; }
ol, ul { list-style: none; }
button, input, select { font: inherit; color: inherit; border-radius: 0; }
button { background: none; border: 0; padding: 0; cursor: pointer; }
svg { display: block; fill: currentColor; flex: none; }
.defs { position: absolute; width: 0; height: 0; }
.hole { fill: #fff; }
.hole-line { stroke: var(--hole, #fff); stroke-width: 2; fill: none; }

.board {
  display: grid;
  grid-template-columns: 1fr 97px 1fr 65px 1fr 67px 1fr;
  row-gap: 103px;
  align-items: start;
  padding: 30px 29px 29px 30px;
}
.frame { border: 1px solid var(--line); background: #fff; min-width: 0; }
.c1, .c5 { grid-column: 1; }
.c2, .c6 { grid-column: 3; --inset: 8px; }
.c3, .c7 { grid-column: 5; }
.c4, .c8 { grid-column: 7; }
.c1, .c2, .c3, .c4 { grid-row: 1; }
.c5, .c6, .c7, .c8 { grid-row: 2; }

/* header */
.top {
  display: flex;
  align-items: center;
  height: 100px;
  padding: 0 11px 0 var(--inset);
  border-bottom: 1px solid var(--line);
  font-size: 16px;
  color: #000;
}
.logo { display: flex; align-items: center; gap: 9px; margin-right: 36px; }
.logo svg { width: 48px; height: 55px; }
.word { display: flex; flex-direction: column; }
.word b { font-size: 26px; line-height: 24px; color: #929292; }
.word span { font-size: 23px; line-height: 22px; letter-spacing: 9px; color: #2e3838; }
.top nav { display: flex; gap: 26px; }
.who { display: flex; align-items: center; gap: 14px; margin: 0 32px 0 auto; }
.who svg { width: 19px; height: 19px; color: var(--ink); }
.ic { color: var(--ink); }
.ic + .ic { margin-left: 9px; }
.ic svg { width: 19px; height: 19px; }
.ic + .ic svg { width: 20px; }

/* title, search and view switch */
.tools {
  display: grid;
  grid-template-columns: 168px minmax(0, 615px) 1fr;
  grid-template-rows: 33px auto;
  height: 75px;
  border-bottom: 1px solid var(--line);
}
.tools h2 { grid-column: 1; padding-left: var(--inset); font-size: 18px; line-height: 35px; color: var(--soft); white-space: nowrap; }
.search { grid-column: 2; display: flex; border: 1px solid var(--line); border-top: 0; background: #fff; }
.search input { flex: 1; min-width: 0; border: 0; padding: 0 14px 0 13px; font-size: 16px; background: none; outline: 0; }
.search input::placeholder { color: var(--soft); opacity: 1; }
.search button { width: 46px; border-left: 1px solid var(--line); color: #666; display: grid; place-items: center; }
.search svg { width: 24px; height: 22px; }
.views {
  grid-column: 2;
  justify-self: start;
  display: flex;
  align-items: center;
  gap: 13px;
  width: 54px;
  height: 22px;
  margin-top: 15px;
  padding-left: 6px;
  border: 1px solid #999;
  color: #555;
}
.views svg { width: 12px; height: 12px; }
.views button + button svg { width: 14px; }
.bare { height: 33px; border-bottom: 0; }
.bare .search { grid-column: 2; }
.small { grid-template-rows: 32px auto; --line: #777; }
.small.bare { height: 32px; }
.small .search svg { width: 13px; height: 13px; margin-bottom: 4px; }
.small .views { margin-top: 8px; }
.c5 .tools { height: 77px; }
.c7 .tools { height: 76px; border-color: #4a4a4a; }
.c8 .tools { height: 77px; border-color: #4a4a4a; }

/* map and hero */
.hero { position: relative; height: 362px; border-bottom: 1px solid var(--line); }
.map { position: absolute; left: 8px; top: 72px; width: 53px; display: flex; flex-direction: column; align-items: center; gap: 26px; color: #777; }
.pad {
  width: 53px;
  height: 53px;
  border: 1px solid #888;
  border-radius: 50%;
  display: grid;
  grid-template-columns: 1fr 1fr 1fr;
  grid-template-rows: 1fr 1fr 1fr;
  place-items: center;
}
.pad svg { width: 14px; height: 9px; }
.pad button:nth-child(1) { grid-area: 1 / 2; }
.pad button:nth-child(2) { grid-area: 2 / 1; transform: rotate(-90deg); }
.pad button:nth-child(3) { grid-area: 2 / 3; transform: rotate(90deg); }
.pad button:nth-child(4) { grid-area: 3 / 2; transform: rotate(180deg); }
.zoom { display: flex; flex-direction: column; align-items: center; }
.zoom button {
  width: 16px;
  height: 16px;
  border: 1px solid #555;
  border-radius: 2px;
  background: linear-gradient(#555, #555) center / 10px 2px no-repeat #fff;
}
.zoom .in { background: linear-gradient(#555, #555) center / 10px 2px no-repeat, linear-gradient(#555, #555) center / 2px 10px no-repeat, #fff; }
.zoom input {
  appearance: none;
  writing-mode: vertical-lr;
  direction: rtl;
  width: 16px;
  height: 71px;
  margin: 0;
  background: linear-gradient(90deg, #777 1px, #fff 1px, #fff 3px, #777 3px) center / 4px 100% no-repeat;
}
.zoom input::-webkit-slider-thumb {
  appearance: none;
  width: 16px;
  height: 9px;
  border: 1px solid #555;
  background: linear-gradient(#555, #555) center / 10px 3px no-repeat #fff;
}
.callout {
  position: absolute;
  right: 0;
  bottom: 57px;
  width: 248px;
  height: 67px;
  padding: 16px 0 0 18px;
  border: 1px solid var(--line);
  border-right: 0;
  color: var(--soft);
  font-size: 16px;
  line-height: 18px;
}
.callout b { display: block; font-size: 18px; }
.dots { position: absolute; left: 0; right: 0; bottom: 14px; display: flex; justify-content: center; gap: 10px; }
.dots i { width: 10px; height: 10px; border-radius: 50%; background: #ccc; }
.dots i:first-child { background: #ddd; }

.bar { height: 50px; padding-left: var(--inset); border-bottom: 1px solid var(--line); font-size: 18px; line-height: 50px; color: var(--soft); }

/* cards */
.carousel { position: relative; display: grid; grid-template-columns: 386fr 397fr 167fr; height: 343px; border-bottom: 1px solid var(--line); }
.grid { display: grid; grid-template-columns: repeat(3, 1fr); grid-auto-rows: 259px; }
.card { position: relative; min-width: 0; padding: 15px 10px 0 var(--inset); border-right: 1px solid var(--line); border-bottom: 1px solid var(--line); }
.grid .card:nth-child(3n), .carousel .card:nth-child(3) { border-right: 0; }
.head { display: flex; justify-content: space-between; align-items: flex-start; }
.card h3, .row h3 { font-size: 18px; line-height: 23px; white-space: nowrap; }
.add { color: var(--ink); }
.add svg { width: 25px; height: 13px; margin-top: 4px; }
.stars { width: 82px; height: 13px; margin-top: 4px; }
.sub { margin-top: 2px; font-size: 12px; line-height: 14px; font-style: italic; color: #111; white-space: nowrap; }
.card.big { padding: 16px 19px 0 var(--inset); border-bottom: 0; }
.card.big ~ .big { padding-left: 17px; }
.card.big:nth-child(3) { overflow: hidden; padding-left: 16px; padding-right: 0; }
.big h3 { font-size: 21px; line-height: 26px; }
.big .add svg { width: 31px; height: 16px; margin-top: 6px; }
.big .stars { width: 98px; height: 16px; margin-top: 11px; }

.arrow { position: absolute; width: 70px; height: 85px; background: #777; color: #fff; display: grid; place-items: center; }
.arrow svg { width: 19px; height: 32px; }
.carousel .arrow { top: 127px; }
.prev { left: 0; }
.carousel .prev { width: 69px; padding-right: 7px; }
.next { right: 0; }

/* add-to-list popover */
.pop { position: absolute; z-index: 2; right: 8px; top: 50px; width: 210px; border: 1px solid #d8d8d8; background: #f7f7f7; }
.big .pop { top: 56px; right: 9px; }
.pop::before {
  content: "";
  position: absolute;
  right: 14px;
  top: -7px;
  width: 11px;
  height: 11px;
  border: 1px solid #d8d8d8;
  border-right: 0;
  border-bottom: 0;
  background: linear-gradient(135deg, #fff 50%, transparent 50%);
  transform: rotate(45deg);
}
.pop h4 { padding-left: 14px; font-size: 14px; line-height: 35px; border-bottom: 1px solid #d8d8d8; }
.pop label, .pop button { display: flex; align-items: center; width: 100%; height: 33px; padding-left: 14px; }
.pop label { background: #eaeaea; gap: 8px; }
.pop input { appearance: none; width: 13px; height: 13px; margin: 0; border: 1px solid #b0b0b0; border-radius: 2px; background: #fff; }
.pop button { gap: 9px; font-family: Roboto, "Liberation Sans", sans-serif; font-weight: 300; font-size: 13px; color: #777; }
.pop button svg { width: 12px; height: 12px; color: var(--ink); }

/* filter bar */
.filters { display: flex; align-items: center; height: 42px; padding-left: 9px; border-bottom: 1px solid var(--line); }
.filters.open { border-bottom: 0; --fbg: #6e6e6e; }
.ftoggle { align-self: stretch; width: 60px; margin-right: 21px; background: var(--fbg, var(--mid)); color: #fff; font-size: 12px; line-height: 14px; display: flex; flex-direction: column; align-items: center; justify-content: center; gap: 1px; }
.ftoggle span { display: flex; align-items: center; gap: 5px; height: 16px; }
.f { width: 15px; height: 15px; }
.r { width: 9px; height: 15px; }
.d { width: 15px; height: 9px; }
.sort { position: relative; width: 247px; margin-right: 19px; color: #fff; }
select { appearance: none; width: 100%; height: 29px; border: 0; outline: 0; font-size: 14px; }
.sort select { background: var(--mid); padding: 0 10px; }
.sort::after, .selects label::after { content: ""; position: absolute; border: 6px solid transparent; border-top: 7px solid #fff; border-bottom: 0; right: 8px; top: 11px; pointer-events: none; }
.tagic { width: 22px; height: 19px; margin-right: 8px; color: #999; }
.chip { display: flex; align-items: center; justify-content: space-between; width: 58px; height: 24px; padding: 0 5px; margin-right: 8px; background: #999; color: #fff; font-size: 12px; font-weight: bold; --hole: #999; }
.chip.wide { width: 112px; padding: 0 7px 0 8px; }
.chip button svg { width: 12px; height: 12px; }
.four { display: flex; gap: 2px; }
.four svg { width: 14px; height: 14px; }

/* open filter panel */
.panel { height: 259px; padding: 24px 9px 0; background: #6e6e6e; border-bottom: 1px solid var(--line); color: #fff; }
.selects { display: grid; grid-template-columns: repeat(4, 139px); gap: 23px 20px; }
.selects label { position: relative; }
.selects select { background: linear-gradient(#d4d4d4, #d4d4d4) right / 24px 100% no-repeat #fcfcfc; color: var(--ink); padding: 0 5px; }
.selects label::after { border-width: 6px 4px 0; border-top-color: var(--ink); top: 12px; }
.tagrow { display: flex; gap: 50px; margin-top: 25px; font-weight: bold; line-height: 20px; }
.kw { position: relative; width: 268px; }
.kw label { display: block; }
.kw input { width: 100%; height: 29px; margin-top: 8px; padding: 0 9px; border: 1px solid #b0b0b0; background: #fff; color: var(--ink); font-weight: normal; outline: 0; }
.sugg { position: absolute; z-index: 2; left: 0; top: 59px; width: 160px; height: 90px; border: 1px solid #ccc; background: #fff; color: #000; font-weight: normal; }
.sugg li { padding-left: 19px; line-height: 26px; }
.sugg .on { margin-bottom: 2px; line-height: 27px; background: var(--mid); color: #e6e6e6; }
.ptags h4 { font-size: 14px; }
.tags { display: grid; grid-template-columns: 59px 59px 139px 79px 119px; gap: 12px 20px; margin-top: 10px; }
.tags button { display: flex; align-items: center; justify-content: space-between; height: 24px; padding: 0 6px 0 5px; background: #999; color: #fff; font-size: 10px; font-weight: bold; --hole: #999; }
.tags svg { width: 12px; height: 12px; }

/* list rows */
.row { display: grid; grid-template-columns: 228px 1fr; height: 116px; border-bottom: 1px solid var(--line); }
.ph { width: 100%; height: 115px; border-right: 1px solid var(--line); }
.ph path { stroke: #aaa; stroke-width: 1; vector-effect: non-scaling-stroke; fill: none; }
.info { min-width: 0; padding: 12px 10px 0 19px; }
.line { display: flex; align-items: center; }
.row .stars { margin: 4px 0 0 7px; }
.row .add { margin-left: auto; margin-right: 30px; }
.row .info p { white-space: nowrap; }
.row p:not(.sub) { margin-top: 3px; font-size: 12px; line-height: 20px; color: #444; }
.edit { margin: 3px 0 0 10px; }
.share { margin: 3px 0 0 auto; }
.edit svg, .share svg { width: 20px; height: 17px; }
.row .sub { margin-top: -1px; }
.c8 .sub { margin-top: 3px; }

/* pagination and footer */
.pages { display: flex; align-items: center; justify-content: center; gap: 43px; height: 61px; border-bottom: 1px solid var(--line); font-size: 16px; color: #777; }
.pages ol { display: flex; align-items: center; line-height: 22px; }
.pages li { padding: 0 8px; }
.pages li:first-child { padding: 0 3px 0 0; }
.pages .on { display: block; width: 18px; text-align: center; background: #777; color: #fff; font-weight: bold; }
.pages svg { width: 9px; height: 15px; color: #888; }
footer { display: flex; align-items: center; gap: 45px; height: 49px; padding-left: 14px; font-size: 13px; color: #000; }
.c1 footer { height: 48px; }
.c3 footer, .c4 footer, .c6 footer { height: 52px; }
.c4 .pages { height: 41px; }
.c5 .pages { height: 58px; }
.c5 footer { height: 55px; padding-left: 8px; }
.c7 .pages { height: 63px; }
.c7 footer { height: 50px; }
.c8 .pages { height: 60px; }
.c8 footer { height: 51px; padding-left: 11px; }

/* tabs */
.tabs { display: grid; grid-template-columns: 158px 159px 1fr; height: 42px; border-bottom: 1px solid var(--line); }
.tabs a { padding-left: var(--inset); line-height: 42px; font-weight: bold; color: #fff; background: var(--pale); }
.tabs .on { background: var(--mid); }
.c7 .tabs { height: 41px; }
.tabs.lined { grid-template-columns: 158px 157px 160px 1fr; height: 41px; background: var(--pale); }
.lined a { border-right: 1px solid #777; }

/* hotel profile */
.name { padding-left: 7px; }
.name h1 { font-size: 32px; line-height: 38px; white-space: nowrap; }
.name p { font-size: 12px; line-height: 22px; }
.photo { height: 339px; border-color: #888; }
.photo .map { top: 32px; left: 7px; }
.book { position: absolute; right: 10px; top: 211px; width: 139px; display: grid; gap: 10px; color: #fff; }
.book button { background: var(--mid); border: 1px solid #6e6e6e; }
.now { height: 43px; font-size: 18px; }
.tolist { display: flex; align-items: center; justify-content: center; gap: 11px; height: 39px; font-size: 14px; }
.tolist svg { width: 25px; height: 13px; }
.thumbs { position: relative; display: grid; grid-template-columns: repeat(6, 148fr) 62fr; height: 99px; border-bottom: 1px solid #888; background: #eee; color: #999; font-size: 12px; }
.thumbs span { display: grid; place-items: center; border-right: 1px solid #888; }
.thumbs span:nth-child(7) { border-right: 0; }
.thumbs .arrow { top: 5px; }
.detail { display: grid; grid-template-columns: 543fr 407fr; height: 255px; border-bottom: 1px solid #777; }
.detail h2, .feat h2 { font-size: 21px; line-height: 27px; }
.desc { padding: 11px 0 0 var(--inset); border-right: 1px solid #777; }
.desc p, .feat p { font-size: 14px; line-height: 23px; white-space: nowrap; }
.desc p { margin-top: 16px; }
.ratings { padding: 11px 11px 0 19px; }
.chart { display: flex; justify-content: space-between; align-items: flex-start; margin-top: 18px; }
.scale { display: grid; gap: 5px; }
.scale span { display: flex; gap: 6px; }
.scale svg { width: 21px; height: 20px; }
.bars { display: grid; gap: 4px; width: 218px; margin-top: 3px; }
.bars div { height: 20px; background: #dfe1e0; }
.bars i { display: block; height: 100%; background: var(--mid); }
.feat { height: 171px; padding: 22px 0 0 var(--inset); border-bottom: 1px solid var(--line); }
.feat p { margin-top: 11px; }

/* compare */
.results { min-height: 780px; }
.c8 .results { min-height: 782px; }
.newrow { display: flex; align-items: center; gap: 29px; width: 100%; height: 116px; padding-left: 9px; border-bottom: 1px solid var(--line); }
.newrow, .new button { font-family: Roboto, "Liberation Sans", sans-serif; font-weight: 300; font-size: 17px; color: #666; }
.newrow span { padding-bottom: 8px; }
.newrow svg { width: 50px; height: 50px; color: var(--ink); }
.new button { display: flex; flex-direction: column; align-items: center; gap: 16px; width: 100%; padding-top: 60px; }
.new svg { width: 75px; height: 75px; color: var(--ink); }
```
